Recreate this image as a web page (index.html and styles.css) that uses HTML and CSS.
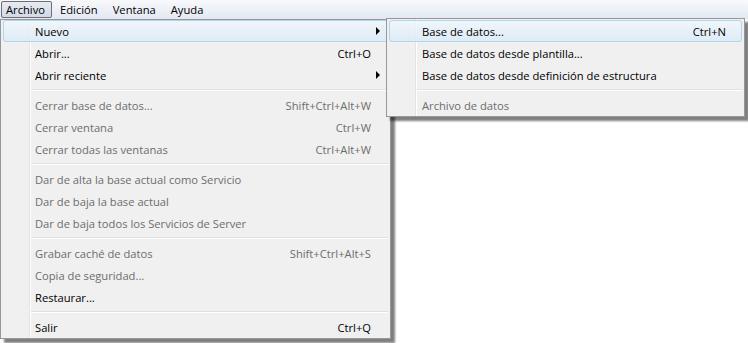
FILE: index.html
```html
<!DOCTYPE html>
<html lang="es">
<head>
    <meta charset="UTF-8">
    <meta name="viewport" content="width=device-width, initial-scale=1.0">
    <title>Archivo</title>
    <link rel="stylesheet" href="styles.css">
</head>
<body>
    <!-- Menu bar -->
    <div class="menubar">
        <span class="top-item open">Archivo</span>
        <span class="top-item">Edición</span>
        <span class="top-item">Ventana</span>
        <span class="top-item">Ayuda</span>
    </div>

    <!-- Archivo dropdown -->
    <div class="menu main-menu">
        <div class="item hover"><span>Nuevo</span><span class="key"></span><span class="arrow"></span></div>
        <div class="item"><span>Abrir...</span><span class="key">Ctrl+O</span></div>
        <div class="item"><span>Abrir reciente</span><span class="key"></span><span class="arrow"></span></div>
        <div class="sep"></div>
        <div class="item off"><span>Cerrar base de datos...</span><span class="key">Shift+Ctrl+Alt+W</span></div>
        <div class="item off"><span>Cerrar ventana</span><span class="key">Ctrl+W</span></div>
        <div class="item off"><span>Cerrar todas las ventanas</span><span class="key">Ctrl+Alt+W</span></div>
        <div class="sep"></div>
        <div class="item off"><span>Dar de alta la base actual como Servicio</span></div>
        <div class="item off"><span>Dar de baja la base actual</span></div>
        <div class="item off"><span>Dar de baja todos los Servicios de Server</span></div>
        <div class="sep"></div>
        <div class="item off"><span>Grabar caché de datos</span><span class="key">Shift+Ctrl+Alt+S</span></div>
        <div class="item off"><span>Copia de seguridad...</span></div>
        <div class="item"><span>Restaurar...</span></div>
        <div class="sep"></div>
        <div class="item"><span>Salir</span><span class="key">Ctrl+Q</span></div>
    </div>

    <!-- Nuevo submenu -->
    <div class="menu sub-menu">
        <div class="item hover"><span>Base de datos...</span><span class="key">Ctrl+N</span></div>
        <div class="item"><span>Base de datos desde plantilla...</span></div>
        <div class="item"><span>Base de datos desde definición de estructura</span></div>
        <div class="sep"></div>
        <div class="item off"><span>Archivo de datos</span></div>
    </div>
</body>
</html>
```

FILE: styles.css
```css
* {
    margin: 0;
    padding: 0;
    box-sizing: border-box;
}

body {
    width: 748px;
    height: 343px;
    background: white;
    font-family: 'Open Sans', 'Noto Sans', sans-serif;
    font-size: 11.2px;
    color: black;
    position: relative;
    overflow: hidden;
}

/* Menu bar */
.menubar {
    display: flex;
    height: 19px;
    padding: 1px 0 0 1px;
    background: linear-gradient(#f8f9fc, #e3e8f2);
}
.top-item {
    height: 17px;
    line-height: 15px;
    padding: 0 6px 0 4px;
    margin-right: 3px;
    border: 1px solid transparent;
}
.top-item.open {
    border-color: #6e6e6e;
    border-radius: 2px;
    background: linear-gradient(#e6eaf2, #d3dae6);
}

/* Dropdowns */
.menu {
    position: absolute;
    background: #f0f0f0;
    border: 1px solid #979797;
    box-shadow: 4px 4px 2px rgba(0, 0, 0, 0.5);
}
.menu::before {
    content: "";
    position: absolute;
    top: 0;
    bottom: 0;
    left: 28px;
    width: 1px;
    background: #e2e3e3;
    border-right: 1px solid white;
    box-sizing: content-box;
}
.main-menu {
    top: 19px;
    left: 0;
    width: 391px;
    height: 320px;
}
.sub-menu {
    top: 18px;
    left: 386px;
    width: 359px;
    padding-top: 1px;
}

.item {
    position: relative;
    display: grid;
    grid-template-columns: 1fr auto 16px;
    align-items: center;
    height: 22px;
    margin: 0 2px;
    padding-left: 31px;
    border: 1px solid transparent;
    border-radius: 3px;
    white-space: nowrap;
}
.sub-menu .item {
    padding-left: 32px;
    grid-template-columns: 1fr auto 15px;
}
.item.hover {
    border-color: #aed6ec;
    background: linear-gradient(rgba(240, 247, 252, 0.85), rgba(220, 234, 246, 0.85));
}
.item.off {
    color: #6d6d6d;
}
.key {
    justify-self: end;
}
.arrow {
    grid-column: 3;
    margin-left: 5px;
    width: 0;
    height: 0;
    border-top: 4px solid transparent;
    border-bottom: 4px solid transparent;
    border-left: 4px solid black;
}

.sep {
    height: 8px;
    margin-left: 30px;
    margin-right: 2px;
    padding-top: 3px;
}
.sep::after {
    content: "";
    display: block;
    height: 1px;
    background: #e0e0e0;
    border-bottom: 1px solid white;
    box-sizing: content-box;
}
```
